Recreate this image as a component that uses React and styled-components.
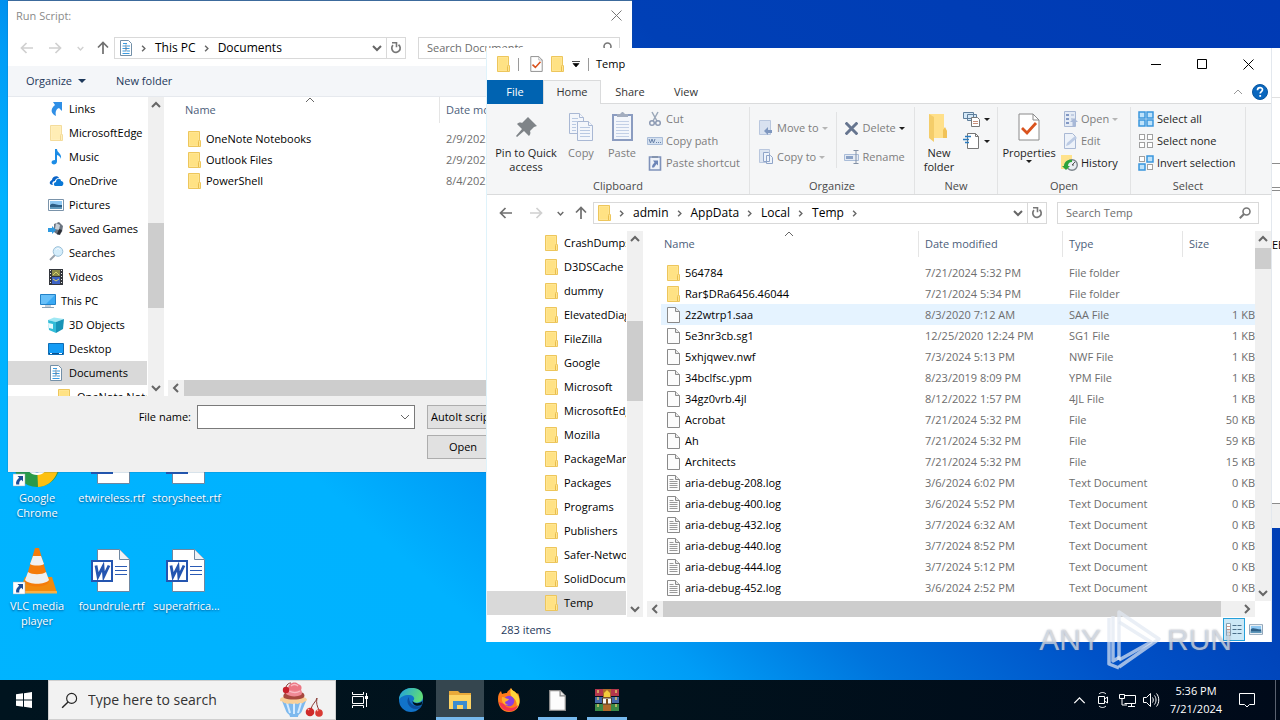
import React from "react";
import styled, { createGlobalStyle } from "styled-components";

const GlobalStyle = createGlobalStyle`
  * {
    box-sizing: border-box;
  }
  body {
    margin: 0;
    font-family: "Open Sans", "Noto Sans", sans-serif;
    font-size: 11px;
    line-height: 16px;
    color: #000;
    overflow: hidden;
  }
  button, input, select {
    font: inherit;
    color: inherit;
    border: 0;
    padding: 0;
    margin: 0;
    background: none;
    border-radius: 0;
    outline: none;
  }
  svg {
    display: block;
    flex: none;
  }
`;

/* ---------- desktop ---------- */

const Desktop = styled.div`
  position: relative;
  display: flex;
  flex-direction: column;
  justify-content: flex-end;
  height: 100vh;
  overflow: hidden;
  background: linear-gradient(
    42deg,
    #00b4ff 0%,
    #00b2ff 28%,
    #009cf6 36%,
    #0074dc 45%,
    #0052c8 56%,
    #0040b6 68%,
    #003ab4 100%
  );
`;

const Shortcuts = styled.div`
  position: absolute;
  left: 0;
  top: 438px;
  display: grid;
  grid-template-columns: 74px 75px 75px;
  grid-auto-rows: 108px;
`;

const Shortcut = styled.button`
  display: flex;
  flex-direction: column;
  align-items: center;
  color: #fff;
  line-height: 15px;
  text-shadow: 0 1px 2px rgba(0, 40, 90, 0.7);
  svg {
    margin-bottom: 2px;
  }
`;

const BackWindow = styled.div`
  position: absolute;
  right: 0;
  top: 48px;
  width: 300px;
  height: 480px;
  display: flex;
  flex-direction: column;
  align-items: flex-end;
  background: #fff;
`;

const BackBar = styled.div`
  width: 100%;
  height: ${(p) => p.$height}px;
  border-bottom: 1px solid ${(p) => p.$line};
`;

const BackText = styled.div`
  flex: 1;
  width: 8px;
  padding-top: 46px;
  overflow: hidden;
`;

const BackFoot = styled.div`
  width: 100%;
  height: 25px;
  background: #f0f0f0;
  border-top: 1px solid #8c8c8c;
`;

/* ---------- shared window parts ---------- */

const Dialog = styled.section`
  position: absolute;
  left: 8px;
  top: 0;
  width: 624px;
  display: flex;
  flex-direction: column;
  height: 472px;
  background: #fff;
  border-top: 1px solid #3c6a9c;
  box-shadow: 0 0 1px #1a5a8a;
`;

const Explorer = styled.section`
  position: absolute;
  left: 486px;
  right: 8px;
  top: 48px;
  height: 594px;
  display: flex;
  flex-direction: column;
  background: #fff;
  border-left: 1px solid #dff3fb;
  border-right: 1px solid #e3e8ee;
`;

const NavRow = styled.div`
  display: flex;
  align-items: center;
  height: 36px;
  padding: 0 12px 0 ${(p) => p.$left}px;
`;

const NavButton = styled.button`
  display: flex;
  justify-content: center;
  width: ${(p) => p.$width || 28}px;
`;

const Address = styled.div`
  display: flex;
  align-items: center;
  flex: ${(p) => (p.$width ? "none" : 1)};
  width: ${(p) => (p.$width ? `${p.$width}px` : "auto")};
  height: 22px;
  padding-left: 4px;
  border: 1px solid #d9d9d9;
  font-size: 12px;
`;

const Crumb = styled.button`
  display: flex;
  align-items: center;
  svg {
    margin: 0 8px 0 7px;
  }
`;

const AddressSpace = styled.div`
  flex: 1;
`;

const AddressButton = styled.button`
  display: flex;
  align-items: center;
  justify-content: center;
  width: 19px;
  height: 20px;
  border-left: ${(p) => (p.$line ? "1px solid #d9d9d9" : "0")};
`;

const SearchBox = styled.label`
  display: flex;
  align-items: center;
  width: 202px;
  height: 22px;
  margin-left: ${(p) => p.$gap}px;
  padding: 0 7px 0 8px;
  border: 1px solid #d9d9d9;
  input {
    flex: 1;
    min-width: 0;
  }
  input::placeholder {
    color: #6d6d6d;
    opacity: 1;
  }
`;

const Split = styled.div`
  display: flex;
  flex: 1;
  min-height: 0;
`;

const Tree = styled.div`
  width: ${(p) => p.$width}px;
  overflow: hidden;
`;

const TreeItem = styled.button`
  display: flex;
  align-items: center;
  width: 100%;
  height: 24px;
  padding-left: ${(p) => p.$indent}px;
  gap: 5px;
  overflow: hidden;
  white-space: nowrap;
  background: ${(p) => (p.$active ? "#d9d9d9" : "none")};
`;

const IconSlot = styled.span`
  display: flex;
  justify-content: center;
  flex: none;
  width: ${(p) => p.$width || 16}px;
`;

const VTrack = styled.div`
  display: flex;
  flex-direction: column;
  justify-content: space-between;
  width: 16px;
  margin-left: ${(p) => p.$left || 0}px;
  margin-bottom: ${(p) => p.$bottom || 0}px;
  background: #f0f0f0;
`;

const HTrack = styled.div`
  display: flex;
  height: 16px;
  background: #f0f0f0;
`;

const ScrollButton = styled.button`
  display: flex;
  align-items: center;
  justify-content: center;
  flex: none;
  width: 16px;
  height: 16px;
`;

const Rail = styled.div`
  display: flex;
  flex-direction: ${(p) => (p.$row ? "row" : "column")};
  flex: 1;
`;

const Space = styled.div`
  flex: ${(p) => p.$grow};
`;

const Thumb = styled.div`
  flex: ${(p) => p.$grow};
  background: #cdcdcd;
`;

const Pane = styled.div`
  display: flex;
  flex-direction: column;
  flex: 1;
  min-width: 0;
  margin-left: 4px;
`;

const TableArea = styled.div`
  flex: 1;
  min-height: 0;
  overflow: hidden;
  padding-left: 14px;
`;

const Table = styled.table`
  width: 100%;
  table-layout: fixed;
  border-collapse: collapse;
  white-space: nowrap;
  th {
    height: 31px;
    padding: 0;
    vertical-align: top;
    text-align: left;
    font-weight: 400;
    color: #4c607a;
  }
  td {
    height: 21px;
    padding: 0 0 0 6px;
    overflow: hidden;
    color: #6d6d6d;
  }
  td:first-child {
    color: #000;
  }
  td:nth-child(4) {
    text-align: right;
    padding: 0;
  }
`;

const HeadCell = styled.div`
  position: relative;
  display: flex;
  align-items: center;
  height: 26px;
  padding-left: ${(p) => (p.$first ? 3 : 6)}px;
  border-right: ${(p) => (p.$last ? "0" : "1px solid #e5e5e5")};
  svg {
    position: absolute;
    top: -2px;
    left: 50%;
    margin-left: -6px;
  }
`;

const FileRow = styled.tr`
  background: ${(p) => (p.$active ? "#e5f3ff" : "none")};
`;

const FileName = styled.div`
  display: flex;
  align-items: center;
  gap: 5px;
`;

/* ---------- run script dialog ---------- */

const DialogTitle = styled.header`
  display: flex;
  align-items: center;
  justify-content: space-between;
  height: 29px;
  padding: 0 10px 0 8px;
  color: #8a8a8a;
`;

const Toolbar = styled.div`
  display: flex;
  align-items: center;
  gap: 30px;
  height: 31px;
  padding-left: 18px;
  background: #f4f6f9;
  border-bottom: 1px solid #e6e9ee;
  color: #1e395b;
`;

const ToolButton = styled.button`
  display: flex;
  align-items: center;
  gap: 6px;
`;

const DialogFooter = styled.footer`
  display: grid;
  grid-template-columns: 183px 218px 110px;
  grid-auto-rows: 24px;
  column-gap: 6px;
  row-gap: 6px;
  height: 76px;
  padding-top: 9px;
  background: #f0f0f0;
`;

const FieldLabel = styled.label`
  text-align: right;
  line-height: 24px;
`;

const Combo = styled.div`
  display: flex;
  align-items: center;
  padding-right: 4px;
  background: #fff;
  border: 1px solid #7a7a7a;
  input {
    flex: 1;
    min-width: 0;
    padding-left: 4px;
  }
`;

const TypeSelect = styled.select`
  appearance: none;
  margin-left: 6px;
  padding-left: 3px;
  background: #e1e1e1;
  border: 1px solid #adadad;
`;

const OpenButton = styled.button`
  grid-column: 3;
  margin-left: 6px;
  width: 72px;
  background: #e1e1e1;
  border: 1px solid #adadad;
`;

/* ---------- explorer ---------- */

const TitleBar = styled.header`
  display: flex;
  align-items: center;
  height: 32px;
  padding-left: 10px;
`;

const Divider = styled.span`
  width: 1px;
  height: 13px;
  margin: 0 ${(p) => p.$right || 7}px 0 8px;
  background: #9a9a9a;
`;

const TitleText = styled.span`
  flex: 1;
`;

const Control = styled.button`
  display: flex;
  align-items: center;
  justify-content: center;
  width: 46px;
  height: 30px;
`;

const Tabs = styled.div`
  display: flex;
  align-items: center;
  height: 24px;
  border-bottom: 1px solid #dadbdc;
`;

const Tab = styled.button`
  width: ${(p) => p.$width}px;
  height: 24px;
  color: ${(p) => (p.$file ? "#fff" : "#333")};
  background: ${(p) => (p.$file ? "#0063b1" : p.$active ? "#f5f6f7" : "none")};
  border: 1px solid ${(p) => (p.$file ? "#0063b1" : p.$active ? "#dadbdc" : "transparent")};
  border-bottom: 0;
`;

const TabTools = styled.div`
  display: flex;
  align-items: center;
  gap: 9px;
  margin-left: auto;
  padding-right: 3px;
`;

const Ribbon = styled.div`
  display: flex;
  height: 91px;
  padding: 3px 0 0;
  background: #f5f6f7;
  border-bottom: 1px solid #dadbdc;
  color: #1e1e1e;
`;

const Group = styled.div`
  display: flex;
  flex-direction: column;
  width: ${(p) => p.$width}px;
  border-right: 1px solid #e2e3e4;
`;

const GroupBody = styled.div`
  display: flex;
  flex: 1;
`;

const GroupLabel = styled.div`
  height: 16px;
  text-align: center;
  color: #4a4a4a;
`;

const BigButton = styled.button`
  display: flex;
  flex-direction: column;
  align-items: center;
  flex: none;
  width: ${(p) => p.$width}px;
  padding-top: 4px;
  line-height: 14px;
  color: ${(p) => (p.$off ? "#7d7d7d" : "#1e1e1e")};
  svg:first-child {
    margin-bottom: 3px;
  }
`;

const Stack = styled.div`
  display: flex;
  flex-direction: column;
  justify-content: ${(p) => (p.$center ? "center" : "flex-start")};
  gap: ${(p) => (p.$center ? 13 : 6)}px;
  padding-top: ${(p) => (p.$center ? 0 : 4)}px;
  padding-left: ${(p) => p.$left || 0}px;
`;

const SmallButton = styled.button`
  display: flex;
  align-items: center;
  gap: 3px;
  height: 16px;
  white-space: nowrap;
  color: ${(p) => (p.$off ? "#7d7d7d" : "#1e1e1e")};
`;

const GroupLine = styled.div`
  width: 1px;
  height: 56px;
  margin: 5px 0 0 8px;
  background: #e2e3e4;
`;

const StatusBar = styled.footer`
  display: flex;
  align-items: center;
  height: 25px;
  padding: 0 4px 0 14px;
  color: #1e395b;
`;

const ViewButton = styled.button`
  display: flex;
  align-items: center;
  justify-content: center;
  width: 22px;
  height: 23px;
  background: ${(p) => (p.$active ? "#cce8f6" : "none")};
  border: 1px solid ${(p) => (p.$active ? "#26a0da" : "transparent")};
`;

/* ---------- taskbar ---------- */

const Taskbar = styled.nav`
  position: relative;
  display: flex;
  height: 40px;
  background: linear-gradient(90deg, #00141f 0%, #01121c 50%, #000a1a 100%);
  color: #fff;
`;

const TaskButton = styled.button`
  display: flex;
  align-items: center;
  justify-content: center;
  width: ${(p) => p.$width || 49}px;
  background: ${(p) => (p.$active ? "#35464f" : "none")};
`;

const RunningButton = styled(TaskButton)`
  padding-top: 3px;
  border-bottom: 3px solid #76b9ed;
  width: ${(p) => p.$width}px;
  margin: 0 ${(p) => p.$gap || 0}px;
`;

const TaskSearch = styled.label`
  display: flex;
  align-items: center;
  width: 288px;
  padding: 0 12px 0 12px;
  gap: 10px;
  background: #f2f2f2;
  border: 1px solid #cfcfcf;
  input {
    flex: 1;
    min-width: 0;
    font-size: 14px;
  }
  input::placeholder {
    color: #333;
    opacity: 1;
  }
`;

const Tray = styled.div`
  display: flex;
  align-items: center;
  margin-left: auto;
`;

const TrayButton = styled.button`
  display: flex;
  justify-content: center;
  width: 24px;
`;

const Clock = styled.div`
  width: 66px;
  text-align: center;
  line-height: 18px;
`;

const ShowDesktop = styled.button`
  width: 5px;
  height: 40px;
  margin-left: 10px;
  border-left: 1px solid #5a6270;
`;

const Watermark = styled.div`
  position: absolute;
  right: 48px;
  bottom: 48px;
  display: flex;
  align-items: center;
  gap: 5px;
  font-family: "Liberation Sans Narrow", "Liberation Sans", sans-serif;
  font-size: 30px;
  line-height: 64px;
  color: rgba(225, 230, 238, 0.7);
  text-shadow: 0 0 2px rgba(90, 100, 120, 0.6);
`;

/* ---------- icons ---------- */

const Folder = ({ w = 13, h = 16, pale }) => (
  <svg width={w} height={h} viewBox="0 0 13 16" opacity={pale ? 0.6 : 1}>
    <path d="M.5 .5h11v8l1 1.500v5.500H.5z" fill="#ffe592" stroke="#edc65c" />
    <path d="M2 2h8v12H2z" fill="#ffe07c" opacity=".6" />
    <path d="M10.500 15v-4.500l1-2" fill="none" stroke="#e9bd4c" />
  </svg>
);

const Page = ({ lines, w = 13, h = 16 }) => (
  <svg width={w} height={h} viewBox="0 0 13 16">
    <path d="M.5 .5h8l4 4v11H.5z" fill="#fcfcfc" stroke="#8a8a8a" />
    <path d="M8.500 .5v4h4" fill="#e8e8e8" stroke="#8a8a8a" />
    {lines && <path d="M2.500 4.500h4M2.500 6.500h8M2.500 8.500h8M2.500 10.500h8M2.500 12.500h8" stroke="#9a9a9a" />}
  </svg>
);

const DocIcon = () => (
  <svg width="14" height="16" viewBox="0 0 14 16">
    <path d="M1.500 .5h8l3 3v12h-11z" fill="#fff" stroke="#7390a8" />
    <path d="M4 3.500h4M3.500 6h3M8 6h3M3.500 8.500h7M3.500 11h3M8 11h3M3.500 13.500h7" stroke="#3a9be0" strokeWidth="1.200" />
    <path d="M7 4.500v7" stroke="#5a7a96" />
  </svg>
);

const LinkIcon = () => (
  <svg width="14" height="16" viewBox="0 0 14 16">
    <path d="M4 1h9v9l-3-3c-3 1-4 4-3 8C3 13 0 9 6 4z" fill="#2f8fe6" />
  </svg>
);

const MusicIcon = () => (
  <svg width="14" height="16" viewBox="0 0 14 16">
    <path d="M6 0h2c0 4 5 4 4 10-.5-2-2-3.500-4-4v6.500C8 15 5 16 3.500 15S2 11 6 11z" fill="#1c8ce6" />
  </svg>
);

const CloudIcon = () => (
  <svg width="15" height="12" viewBox="0 0 15 12">
    <path d="M1 9C0 6 3 5 3 5c0-4 6-5 7-2-3 0-4 2-4 3-3 0-3 3-2 4H3z" fill="#0a64c8" />
    <path d="M6 11c-2-1-1-4 1-4 0-4 5-4 5-1 3 0 3 4 1 5z" fill="#0a78d6" />
  </svg>
);

const PictureIcon = ({ w = 16, h = 12 }) => (
  <svg width={w} height={h} viewBox="0 0 16 12">
    <path d="M.5 .5h15v11H.5z" fill="#fff" stroke="#7a93aa" />
    <path d="M2 2h12v8H2z" fill="#8fc8f2" />
    <path d="M2 6c3-3 5 0 12 0v4H2z" fill="#2e5f86" />
    <path d="M2 8h12v2H2z" fill="#5f97ba" />
  </svg>
);

const GamesIcon = () => (
  <svg width="16" height="14" viewBox="0 0 16 14">
    <path d="M6 2l5-2 4 4-1 6-4 3-4-3z" fill="#6b7480" />
    <path d="M8 1l4 2-1 5-4-1z" fill="#c8d0d8" />
    <path d="M0 6h4V4l4 4-4 4v-2H0z" fill="#2e9ae0" />
    <path d="M11 7l3 1-2 5-3-1z" fill="#2b2f36" />
  </svg>
);

const SearchesIcon = () => (
  <svg width="15" height="15" viewBox="0 0 15 15">
    <path d="M1 14l5-5" stroke="#9aa3ad" strokeWidth="2" />
    <circle cx="9" cy="5.500" r="4.800" fill="#d4edfb" stroke="#9cc0d8" />
    <path d="M7 4c1-2 3-2 4 0" stroke="#fff" fill="none" />
  </svg>
);

const VideoIcon = () => (
  <svg width="14" height="16" viewBox="0 0 14 16">
    <path d="M0 0h14v16H0z" fill="#33363c" />
    <path d="M3 1h8v6H3z" fill="#8a8a4a" />
    <path d="M3 8h8v7H3z" fill="#3d62c4" />
    <path d="M4 6l3-3 3 3M4 10l3 2 3-2" stroke="#d9d36a" fill="none" />
    <path d="M1.500 1v14M12.500 1v14" stroke="#e8e8e8" strokeDasharray="1 2" />
  </svg>
);

const PcIcon = () => (
  <svg width="16" height="14" viewBox="0 0 16 14">
    <path d="M.5 .5h15v10H.5z" fill="#39a9f4" stroke="#2382c8" />
    <path d="M1 1h14L6 10H1z" fill="#7ccbfb" opacity=".7" />
    <path d="M5 12h6M2 13.500h12" stroke="#8ca1b4" />
  </svg>
);

const CubeIcon = () => (
  <svg width="16" height="16" viewBox="0 0 16 16">
    <path d="M0 3l6-2.500L16 2 8 5z" fill="#9fe8f4" />
    <path d="M0 3l8 2v11l-7-3z" fill="#32bcd8" />
    <path d="M8 5l8-3-1 10-7 4z" fill="#1794b8" />
    <path d="M0 6l5 1v5l-4-1z" fill="#e6fbff" />
  </svg>
);

const ScreenIcon = () => (
  <svg width="16" height="12" viewBox="0 0 16 12">
    <path d="M.5 .5h15v11H.5z" fill="#149cf5" stroke="#0f6db4" />
    <path d="M1 10.500h14" stroke="#0a4f8c" />
    <path d="M2 10.500h2M11 10.500h3" stroke="#fff" />
  </svg>
);

const Arrow = ({ dir = "left", color = "#6f6f6f", size = 14 }) => {
  const turns = { left: 0, up: 90, right: 180 };
  return (
    <svg width={size} height={size} viewBox="0 0 14 14">
      <path d="M13 7H2M6.500 2L1.500 7l5 5" fill="none" stroke={color} strokeWidth="1.700" transform={`rotate(${turns[dir]} 7 7)`} />
    </svg>
  );
};

const Chevron = ({ dir = "down", color = "#666", size = 10, stroke = 2 }) => {
  const turns = { down: 0, left: 90, up: 180, right: 270 };
  return (
    <svg width={size} height={size} viewBox="0 0 10 10">
      <path d="M1 3l4 4 4-4" fill="none" stroke={color} strokeWidth={stroke} transform={`rotate(${turns[dir]} 5 5)`} />
    </svg>
  );
};

const Caret = ({ color = "#1e1e1e", w = 6 }) => (
  <svg width={w} height={w / 2} viewBox="0 0 6 3">
    <path d="M0 0h6L3 3z" fill={color} />
  </svg>
);

const Refresh = () => (
  <svg width="12" height="12" viewBox="0 0 12 12">
    <path d="M3 3.200a4.200 4.200 0 1 0 5.500-.4" fill="none" stroke="#777" strokeWidth="1.700" />
    <path d="M2 .8h4.500v4.500" fill="none" stroke="#777" strokeWidth="1.600" />
  </svg>
);

const Magnifier = ({ size = 12, color = "#777", stroke = 2 }) => (
  <svg width={size} height={size} viewBox="0 0 12 12">
    <circle cx="7.500" cy="4.500" r="3.500" fill="none" stroke={color} strokeWidth={stroke * 0.8} />
    <path d="M5 7L.8 11.200" stroke={color} strokeWidth={stroke} />
  </svg>
);

const Cross = ({ size = 11, color = "#000", stroke = 1 }) => (
  <svg width={size} height={size} viewBox="0 0 11 11">
    <path d="M.5 .5l10 10M10.500 .5l-10 10" stroke={color} strokeWidth={stroke} />
  </svg>
);

const Checked = ({ w = 13, h = 16 }) => (
  <svg width={w} height={h} viewBox="0 0 22 28">
    <path d="M1 1h14l6 6v20H1z" fill="#fff" stroke="#8a8a8a" strokeWidth={w > 14 ? 1 : 1.600} />
    <path d="M15 1v6h6" fill="none" stroke="#8a8a8a" />
    <path d="M4 15l5 5 9-10" fill="none" stroke="#d9531e" strokeWidth="2.800" />
  </svg>
);

const PinIcon = () => (
  <svg width="32" height="32" viewBox="0 0 32 32">
    <path d="M18 6l9 9-3 1-4 4c1 2 0 4-1 5l-5-5-7 6-1-1 6-7-5-5c1-1 3-2 5-1l4-4z" fill="#7f8488" />
  </svg>
);

const CopyIcon = () => (
  <svg width="32" height="32" viewBox="0 0 32 32">
    <g fill="#f3f6fb" stroke="#a9b8d4">
      <path d="M4.500 2.500h10l4 4v16h-14z" />
      <path d="M12.500 10.500h11l4 4v15h-15z" />
      <path d="M23.500 10.500v4h4M14.500 2.500v4h4" />
      <path d="M7 7.500h6M7 10.500h5M7 13.500h4M7 16.500h4M7 19.500h4M15 16.500h10M15 19.500h10M15 22.500h10M15 25.500h10" stroke="#b9c9e2" />
    </g>
  </svg>
);

const PasteIcon = () => (
  <svg width="32" height="32" viewBox="0 0 32 32">
    <path d="M7 4h19v25H7z" fill="#f3f6fb" stroke="#8b9cc0" strokeWidth="2" />
    <path d="M11 5V3h3l2-2h1l2 2h3v3H11z" fill="#a3adbf" />
    <path d="M10 10.500h13M10 13.500h13M10 16.500h13M10 19.500h13M10 22.500h13M10 25.500h13" stroke="#c3d0e6" />
  </svg>
);

const CutIcon = () => (
  <svg width="16" height="16" viewBox="0 0 16 16">
    <path d="M5 1l5 9M11 1L6 10" stroke="#9aa7b8" strokeWidth="1.500" />
    <circle cx="5" cy="12" r="2.300" fill="none" stroke="#8e9bb4" strokeWidth="1.500" />
    <circle cx="11" cy="12" r="2.300" fill="none" stroke="#8e9bb4" strokeWidth="1.500" />
  </svg>
);

const PathIcon = () => (
  <svg width="16" height="16" viewBox="0 0 16 16">
    <path d="M.5 4.500h15v7H.5z" fill="#d5e1f0" stroke="#a9bcd8" />
    <path d="M2 6l1.500 4L5 6l1.500 4L8 6M9 9.500h1M11 9.500h1M13 9.500h1" stroke="#6882aa" fill="none" />
  </svg>
);

const ShortcutPaste = () => (
  <svg width="16" height="16" viewBox="0 0 16 16">
    <path d="M2.500 2h11v13h-11z" fill="#eef2f9" stroke="#7f92ba" strokeWidth="1.600" />
    <path d="M5 1h6v2H5z" fill="#8494ae" />
    <path d="M6 5.500h5v5L9.500 9 7 12.500H5c0-2 1-3.500 2.500-5z" fill="#6c85b8" />
  </svg>
);

const MoveIcon = () => (
  <svg width="16" height="16" viewBox="0 0 16 16">
    <path d="M1.500 .5h11v14h-11z" fill="#d9e2f0" stroke="#b9c7de" />
    <path d="M6 11l4-4v3h4v3h-4v2z" fill="#7f97bf" />
  </svg>
);

const CopyToIcon = () => (
  <svg width="16" height="16" viewBox="0 0 16 16">
    <path d="M1.500 .5h10v13h-10z" fill="#dde5f1" stroke="#b9c7de" />
    <path d="M5.500 3.500h5l1 1v8h-6zM8.500 6.500h4l2 2v6h-6z" fill="#eef3fa" stroke="#8fa4c8" />
  </svg>
);

const RenameIcon = () => (
  <svg width="16" height="16" viewBox="0 0 16 16">
    <path d="M.5 5.500h14v6H.5z" fill="#e5ebf4" stroke="#a9bcd8" />
    <path d="M2 7h7v3H2z" fill="#8ba2c6" />
    <path d="M9.500 1.500h5M9.500 14.500h5M12 1.500v13" stroke="#8391a6" />
  </svg>
);

const NewFolderIcon = () => (
  <svg width="32" height="32" viewBox="0 0 32 32">
    <path d="M6 3h15v14l3 3v7H6z" fill="#ffe08a" />
    <path d="M6 3l5 3v25l-5-4z" fill="#f4cd6a" />
    <path d="M20 19l2-3 2 4v7h-4z" fill="#f1c257" />
  </svg>
);

const NewItemIcon = () => (
  <svg width="18" height="16" viewBox="0 0 18 16">
    <path d="M.5 1.500h10v6H.5zM4.500 3.500h9v6h-9z" fill="#d4e8f7" stroke="#5f7f9c" />
    <path d="M8.500 6.500h6l2 2v7h-8z" fill="#fff" stroke="#777" />
    <path d="M10 10.500h5M10 12.500h5" stroke="#c98f7a" />
  </svg>
);

const EasyIcon = () => (
  <svg width="18" height="16" viewBox="0 0 18 16">
    <path d="M4.500 .5h8l3 3v12h-11z" fill="#fff" stroke="#777" />
    <path d="M12.500 .5v3h3" fill="none" stroke="#777" />
    <path d="M2 3.500h6M0 6.500h6M2 9.500h4" stroke="#2b7cc0" strokeWidth="1.400" />
  </svg>
);

const OpenIcon = () => (
  <svg width="16" height="16" viewBox="0 0 16 16">
    <path d="M2.500 .5h11v15h-11z" fill="#e4ebf5" stroke="#a9b8d4" />
    <path d="M4 3h3v2H4zM4 7h3v2H4zM4 11h3v2H4z" fill="#8298c4" />
    <path d="M9 4h3M9 8h2" stroke="#9fb0cf" />
    <path d="M12 7l4 4h-2.500v4h-3v-4H8z" fill="#a8b9d8" />
  </svg>
);

const EditIcon = () => (
  <svg width="16" height="16" viewBox="0 0 16 16">
    <path d="M2.500 .5h8l3 3v12h-11z" fill="#edf2f9" stroke="#a9b8d4" />
    <path d="M4 13l1-3 8-7 2 2-8 7z" fill="#bccbe4" />
  </svg>
);

const HistoryIcon = () => (
  <svg width="18" height="16" viewBox="0 0 18 16">
    <path d="M0 0h11v14H0z" fill="#ffe28c" />
    <circle cx="11" cy="10" r="5.300" fill="#e9eef2" stroke="#7c858c" strokeWidth="1.400" />
    <path d="M11 10l3-3M11 10h2" stroke="#555" />
    <path d="M3 11c0-4 4-7 8-6v2C8 7 7 9 7 11h2l-4 4-4-4z" fill="#2da33c" />
  </svg>
);

const Squares = ({ fills }) => (
  <svg width="16" height="16" viewBox="0 0 16 16">
    {fills.map((on, i) => (
      <rect
        key={i}
        x={(i % 2 ? 9 : 1) + (on ? 0 : 0.5)}
        y={(i > 1 ? 9 : 1) + (on ? 0 : 0.5)}
        width={on ? 6 : 5}
        height={on ? 6 : 5}
        fill={on ? "#bfe3fb" : "#fff"}
        stroke={on ? "#3a96dd" : "#a0a0a0"}
        strokeWidth={on ? 1.500 : 1}
      />
    ))}
  </svg>
);

const HelpIcon = () => (
  <svg width="16" height="16" viewBox="0 0 16 16">
    <circle cx="8" cy="8" r="7.500" fill="#0a67be" stroke="#08569f" />
    <path d="M5.500 6.200c0-3.500 5-3.200 5-.4 0 1.800-2.300 1.800-2.300 3.700" fill="none" stroke="#fff" strokeWidth="1.700" />
    <path d="M7.300 11h1.800v1.800H7.300z" fill="#fff" />
  </svg>
);

const DetailsIcon = () => (
  <svg width="16" height="13" viewBox="0 0 16 13">
    <path d="M.5 .5h4v12h-4z" fill="#fff" stroke="#8aa0b0" />
    <path d="M1 3.500h3M1 6.500h3M1 9.500h3" stroke="#d49a8a" />
    <path d="M6.500 2.500h4M11.500 2.500h4M6.500 6.500h4M11.500 6.500h4M6.500 10.500h4M11.500 10.500h4" stroke="#4a6e88" />
  </svg>
);

const ShortcutBadge = ({ y }) => (
  <g transform={`translate(0 ${y})`}>
    <path d="M0 0h12v12H0z" fill="#fff" stroke="#9ab" strokeWidth=".5" />
    <path d="M4.500 2H10v5.500L8.300 5.800C6.500 7 6 8.500 6.300 10.500H3.200C2.500 8 4 5.500 6.200 3.800z" fill="#1f4e96" />
  </g>
);

const ChromeIcon = () => (
  <svg width="48" height="50" viewBox="0 0 48 50">
    <circle cx="24" cy="26" r="23" fill="#2a9a48" />
    <path d="M24 26L44 15c6 16-3 33-19 34z" fill="#fdc010" />
    <path d="M24 26L4 15C12-1 36-1 44 15z" fill="#e33b2e" />
    <circle cx="24" cy="26" r="11" fill="#fff" />
    <circle cx="24" cy="26" r="8.500" fill="#3b78e7" />
    <ShortcutBadge y={36} />
  </svg>
);

const VlcIcon = () => (
  <svg width="48" height="50" viewBox="0 0 48 50">
    <path d="M12 31h27l5 16H6z" fill="#f28a0e" />
    <path d="M6 45h38v2.500H6z" fill="#fbb041" />
    <path d="M22 2h4l10 34c-4 6-20 6-24 0z" fill="#f57c0a" />
    <path d="M20 10h8l3 8c-3 2-11 2-14 0z" fill="#f1f1f1" />
    <path d="M15 26c4 3 14 3 18 0l3 8c-4 5-20 5-24 0z" fill="#efefef" />
    <ShortcutBadge y={36} />
  </svg>
);

const WordIcon = () => (
  <svg width="44" height="50" viewBox="0 0 44 50">
    <path d="M7.500 3.500h22l10 10v32h-32z" fill="#fff" stroke="#6f87a0" />
    <path d="M29.500 3.500v10h10" fill="#eef2f6" stroke="#6f87a0" />
    <path d="M25 20.500h12M25 24.500h12M25 28.500h12" stroke="#2b5bb5" />
    <path d="M2 15h20v20H2z" fill="#fff" stroke="#2455b0" strokeWidth="2" />
    <path d="M6 19.500l2 11 5-10 .8 10 5.200-11" fill="none" stroke="#2455b0" strokeWidth="2.800" />
  </svg>
);

const WindowsLogo = () => (
  <svg width="16" height="16" viewBox="0 0 16 16">
    <path d="M0 2.300l7-1v6.300H0zM8 1.200L16 0v7.600H8zM0 8.500h7v6.200l-7-1zM8 8.500h8V16l-8-1.200z" fill="#fff" />
  </svg>
);

const Sundae = () => (
  <svg width="44" height="36" viewBox="0 0 44 36">
    <path d="M3 19h24l-4 10c-1 3-4 3-4 6h-8c0-3-3-3-4-6z" fill="#7db9ee" />
    <path d="M8 21l3 10M15 21v11M22 21l-3 10" stroke="#d4ebff" strokeWidth="2" />
    <path d="M1 18c0-3 4-4 14-4s13 2 13 4c-1 2-3 1-4 3-2 1-3-1-5 1-2 0-3-1-5 0-2 0-3-1-5 0-2-1-3 0-5-2-1-1-3 0-3-2z" fill="#f8d09a" />
    <path d="M5 16c-2-3 1-6 4-6l12 0c4 0 6 4 3 6-5 2-14 2-19 0z" fill="#a8483e" />
    <path d="M7 12c-1-3 2-5 5-5h7c4 0 5 4 3 6-4 2-11 2-15-1z" fill="#f08a96" />
    <path d="M9 7c0-6 7-8 10-5 4 1 4 4 3 6-4 1-9 1-13-1z" fill="#ec7683" />
    <path d="M12 4c2-2 5-2 7 0M10 9c4 2 8 2 11 0" fill="none" stroke="#f9bcc4" strokeWidth="1.300" />
    <circle cx="7" cy="8" r="3.200" fill="#c8202c" />
    <path d="M7 5c1-3 3-4 5-4M32 27c1-5 5-7 6-11-1 5 0 8 2 12" fill="none" stroke="#8a3a34" />
    <circle cx="31" cy="30" r="4.300" fill="#cf2a2a" />
    <circle cx="40" cy="31" r="3.800" fill="#d93a34" />
    <path d="M29 28l1-1M38 29l1-1" stroke="#ffb0a8" strokeWidth="1.500" />
  </svg>
);

const TaskViewIcon = () => (
  <svg width="17" height="16" viewBox="0 0 17 16">
    <path d="M.5 0v2.500h11V0M.5 16v-2.500h11V16M.5 4.500h11v7H.5z" fill="none" stroke="#fff" />
    <path d="M14.500 1v14" stroke="#fff" />
    <path d="M13 4h3v3h-3z" fill="#fff" />
  </svg>
);

const EdgeIcon = () => (
  <svg width="24" height="24" viewBox="0 0 24 24">
    <defs>
      <linearGradient id="edge" x1="0" y1="0" x2="1" y2="0.3">
        <stop offset="0" stopColor="#1f9fe0" />
        <stop offset="1" stopColor="#5edb7a" />
      </linearGradient>
    </defs>
    <circle cx="12" cy="12" r="12" fill="#1173c9" />
    <path d="M0 12C0-3 24-4 24 9c0 6-8 7-10 4 3-3 0-6-4-6-5 0-9 2-10 5z" fill="url(#edge)" />
    <path d="M10 9c-4 4 0 12 7 12 3 0 5-2 5.500-3-6 2-13-2-12.500-9z" fill="#0d4f9e" />
    <path d="M13.500 13c2 3 7 3 10 0l-1 4c-5 2-9 0-9-4z" fill="#01121c" />
  </svg>
);

const ExplorerIcon = () => (
  <svg width="24" height="20" viewBox="0 0 24 20">
    <path d="M1 1h9l2 2h11v5H1z" fill="#e8a93a" />
    <path d="M1 5h22v14H1z" fill="#fcd364" />
    <path d="M5 11h14v8h-4v-4H9v4H5z" fill="#3c8cd0" />
  </svg>
);

const FirefoxIcon = () => (
  <svg width="24" height="24" viewBox="0 0 24 24">
    <path d="M1 11c0-4 1-6 3-8l1 3c2-1 4-1 5-1 0-2 3-3 4-5 1 3 4 3 6 6l1-1c3 6 3 19-9 19C5 24 1 18 1 11z" fill="#ff7a1c" />
    <path d="M14 0c1 3 4 3 6 6 4 5 3 12-1 15 2-5 0-10-4-12-2-2-2-6-1-9z" fill="#ffd43a" />
    <path d="M2 14c1 5 5 9 10 9s8-2 9-6c-4 4-12 4-14-1z" fill="#f5364e" />
    <circle cx="12" cy="13" r="5.300" fill="#8a3fe0" />
    <path d="M5 9c3 0 4 2 7 2-1 2-3 2-4 3 0 2 2 3 4 3-5 1-8-3-7-8z" fill="#ffb02e" />
  </svg>
);

const RarIcon = () => (
  <svg width="24" height="22" viewBox="0 0 24 22">
    <path d="M0 0h24v7H0z" fill="#b3364c" />
    <path d="M0 8h24v6H0z" fill="#4468a8" />
    <path d="M0 15h24v7H0z" fill="#3a8a48" />
    <path d="M3 1v20M21 1v20" stroke="#d9c46a" strokeWidth="1.500" strokeDasharray="3 4" />
    <path d="M8 0h8v22H8z" fill="#b06a2a" />
    <path d="M9 4l3-3 3 3v4H9z" fill="#f3cc3c" />
    <path d="M7.500 9h9v6h-9z" fill="#f6f6f0" stroke="#4a3a2a" />
    <path d="M11 10h2v5h-2z" fill="#7a4a1a" />
  </svg>
);

const CameraTray = () => (
  <svg width="14" height="18" viewBox="0 0 14 18">
    <path d="M2.500 5.500h6v7h-6zM8.500 8l3-2v6l-3-2" fill="none" stroke="#fff" />
    <path d="M3 3c2-2 5-2 7 0M3 15c2 2 5 2 7 0" fill="none" stroke="#fff" />
  </svg>
);

const NetworkTray = () => (
  <svg width="17" height="15" viewBox="0 0 17 15">
    <path d="M5.500 2.500h11v8h-11M9 13.500h7M12.500 10.500v3M.5 1.500h5v4h-5zM3 5.500v6.500h5" fill="none" stroke="#fff" />
  </svg>
);

const VolumeTray = () => (
  <svg width="17" height="14" viewBox="0 0 17 14">
    <path d="M.5 4.500h3l4-4v13l-4-4h-3z" fill="none" stroke="#fff" />
    <path d="M9.500 4.500c1 1.500 1 3.500 0 5M11.500 2.500c2 2.500 2 6.500 0 9M13.500 .5c3 3.500 3 9.500 0 13" fill="none" stroke="#fff" />
  </svg>
);

const NotifyIcon = () => (
  <svg width="16" height="16" viewBox="0 0 16 16">
    <path d="M.5 1.500h15v11h-5l-2.500 2.500L5.500 12.500h-5z" fill="none" stroke="#fff" />
  </svg>
);

const PlayMark = () => (
  <svg width="56" height="64" viewBox="0 0 56 64">
    <g fill="none" stroke="rgba(225,232,242,0.7)" strokeWidth="3.500" strokeLinejoin="round">
      <path d="M13 52V4l40 27-40 28" />
      <path d="M7 8v45l7-4M13 14l32 20-32 18" />
      <path d="M3 10v46l10 4" />
    </g>
  </svg>
);

/* ---------- data ---------- */

const dialogTree = [
  { name: "Links", icon: <LinkIcon /> },
  { name: "MicrosoftEdge", icon: <Folder pale /> },
  { name: "Music", icon: <MusicIcon /> },
  { name: "OneDrive", icon: <CloudIcon /> },
  { name: "Pictures", icon: <PictureIcon /> },
  { name: "Saved Games", icon: <GamesIcon /> },
  { name: "Searches", icon: <SearchesIcon /> },
  { name: "Videos", icon: <VideoIcon /> },
  { name: "This PC", icon: <PcIcon />, indent: 32 },
  { name: "3D Objects", icon: <CubeIcon /> },
  { name: "Desktop", icon: <ScreenIcon /> },
  { name: "Documents", icon: <DocIcon />, active: true },
  { name: "OneNote Notebooks", icon: <Folder />, indent: 48 },
];

const dialogFiles = [
  ["OneNote Notebooks", "2/9/2023 9:42 AM"],
  ["Outlook Files", "2/9/2023 9:42 AM"],
  ["PowerShell", "8/4/2023 6:15 PM"],
];

const explorerTree = [
  "CrashDumps",
  "D3DSCache",
  "dummy",
  "ElevatedDiagnostics",
  "FileZilla",
  "Google",
  "Microsoft",
  "MicrosoftEdge",
  "Mozilla",
  "PackageManagement",
  "Packages",
  "Programs",
  "Publishers",
  "Safer-Networking",
  "SolidDocuments",
  "Temp",
];

const files = [
  ["564784", "7/21/2024 5:32 PM", "File folder", ""],
  ["Rar$DRa6456.46044", "7/21/2024 5:34 PM", "File folder", ""],
  ["2z2wtrp1.saa", "8/3/2020 7:12 AM", "SAA File", "1 KB"],
  ["5e3nr3cb.sg1", "12/25/2020 12:24 PM", "SG1 File", "1 KB"],
  ["5xhjqwev.nwf", "7/3/2024 5:13 PM", "NWF File", "1 KB"],
  ["34bclfsc.ypm", "8/23/2019 8:09 PM", "YPM File", "1 KB"],
  ["34gz0vrb.4jl", "8/12/2022 1:57 PM", "4JL File", "1 KB"],
  ["Acrobat", "7/21/2024 5:32 PM", "File", "50 KB"],
  ["Ah", "7/21/2024 5:32 PM", "File", "59 KB"],
  ["Architects", "7/21/2024 5:32 PM", "File", "15 KB"],
  ["aria-debug-208.log", "3/6/2024 6:02 PM", "Text Document", "0 KB"],
  ["aria-debug-400.log", "3/6/2024 5:52 PM", "Text Document", "0 KB"],
  ["aria-debug-432.log", "3/7/2024 6:32 AM", "Text Document", "0 KB"],
  ["aria-debug-440.log", "3/7/2024 8:52 PM", "Text Document", "0 KB"],
  ["aria-debug-444.log", "3/7/2024 5:12 PM", "Text Document", "0 KB"],
  ["aria-debug-452.log", "3/6/2024 2:52 PM", "Text Document", "0 KB"],
  ["", "", "", ""],
];

const fileIcon = (type) => {
  if (type === "File folder") return <Folder />;
  return <Page lines={type === "Text Document"} />;
};

const VScroll = ({ before, thumb, after, left, bottom }) => (
  <VTrack $left={left} $bottom={bottom}>
    <ScrollButton aria-label="Scroll up">
      <Chevron dir="up" />
    </ScrollButton>
    <Rail>
      <Space $grow={before} />
      <Thumb $grow={thumb} />
      <Space $grow={after} />
    </Rail>
    <ScrollButton aria-label="Scroll down">
      <Chevron />
    </ScrollButton>
  </VTrack>
);

const HScroll = ({ thumb, after }) => (
  <HTrack>
    <ScrollButton aria-label="Scroll left">
      <Chevron dir="left" />
    </ScrollButton>
    <Rail $row>
      <Thumb $grow={thumb} />
      <Space $grow={after} />
    </Rail>
    <ScrollButton aria-label="Scroll right">
      <Chevron dir="right" />
    </ScrollButton>
  </HTrack>
);

const RunScriptDialog = () => (
  <Dialog>
    <DialogTitle>
      <span>Run Script:</span>
      <button aria-label="Close">
        <Cross color="#777" />
      </button>
    </DialogTitle>
    <NavRow $left={5}>
      <NavButton aria-label="Back">
        <Arrow color="#d0d0d0" />
      </NavButton>
      <NavButton aria-label="Forward">
        <Arrow dir="right" color="#d0d0d0" />
      </NavButton>
      <NavButton $width={22} aria-label="Recent">
        <Chevron size={7} color="#d0d0d0" />
      </NavButton>
      <NavButton $width={23} aria-label="Up">
        <Arrow dir="up" />
      </NavButton>
      <Address $width={292}>
        <DocIcon />
        <Crumb>
          <Chevron dir="right" size={7} />
          This PC
        </Crumb>
        <Crumb>
          <Chevron dir="right" size={7} />
          Documents
        </Crumb>
        <AddressSpace />
        <AddressButton aria-label="Previous locations">
          <Chevron />
        </AddressButton>
        <AddressButton $line aria-label="Refresh">
          <Refresh />
        </AddressButton>
      </Address>
      <SearchBox $gap={12}>
        <input placeholder="Search Documents" aria-label="Search Documents" />
        <Magnifier />
      </SearchBox>
    </NavRow>
    <Toolbar>
      <ToolButton>
        Organize <Caret w={8} color="#1e395b" />
      </ToolButton>
      <ToolButton>New folder</ToolButton>
    </Toolbar>
    <Split>
      <Tree $width={139}>
        {dialogTree.map((item) => (
          <TreeItem key={item.name} $indent={item.indent || 40} $active={item.active}>
            <IconSlot>{item.icon}</IconSlot>
            {item.name}
          </TreeItem>
        ))}
      </Tree>
      <VScroll left={1} before={110} thumb={85} after={72} />
      <Pane>
        <TableArea>
          <Table>
            <colgroup>
              <col width="258" />
              <col />
            </colgroup>
            <thead>
              <tr>
                <th>
                  <HeadCell $first>
                    Name
                    <Chevron dir="up" stroke={1} />
                  </HeadCell>
                </th>
                <th>
                  <HeadCell $last>Date modified</HeadCell>
                </th>
              </tr>
            </thead>
            <tbody>
              {dialogFiles.map(([name, date]) => (
                <FileRow key={name}>
                  <td>
                    <FileName>
                      <Folder />
                      {name}
                    </FileName>
                  </td>
                  <td>{date}</td>
                </FileRow>
              ))}
            </tbody>
          </Table>
        </TableArea>
        <HScroll thumb={8} after={1} />
      </Pane>
    </Split>
    <DialogFooter>
      <FieldLabel htmlFor="file-name">File name:</FieldLabel>
      <Combo>
        <input id="file-name" type="text" />
        <Chevron stroke={1} />
      </Combo>
      <TypeSelect aria-label="File type">
        <option>AutoIt scripts</option>
      </TypeSelect>
      <OpenButton>Open</OpenButton>
    </DialogFooter>
  </Dialog>
);

const RibbonBar = () => (
  <Ribbon>
    <Group $width={263}>
      <GroupBody>
        <BigButton $width={78}>
          <PinIcon />
          Pin to Quick
          <br />
          access
        </BigButton>
        <BigButton $width={32} $off>
          <CopyIcon />
          Copy
        </BigButton>
        <BigButton $width={50} $off>
          <PasteIcon />
          Paste
        </BigButton>
        <Stack>
          <SmallButton $off>
            <CutIcon /> Cut
          </SmallButton>
          <SmallButton $off>
            <PathIcon /> Copy path
          </SmallButton>
          <SmallButton $off>
            <ShortcutPaste /> Paste shortcut
          </SmallButton>
        </Stack>
      </GroupBody>
      <GroupLabel>Clipboard</GroupLabel>
    </Group>
    <Group $width={165}>
      <GroupBody>
        <Stack $center $left={8}>
          <SmallButton $off>
            <MoveIcon /> Move to <Caret color="#b5b5b5" />
          </SmallButton>
          <SmallButton $off>
            <CopyToIcon /> Copy to <Caret color="#b5b5b5" />
          </SmallButton>
        </Stack>
        <GroupLine />
        <Stack $center $left={7}>
          <SmallButton $off>
            <IconSlot>
              <Cross size={13} color="#66758f" stroke={2.5} />
            </IconSlot>
            Delete <Caret />
          </SmallButton>
          <SmallButton $off>
            <RenameIcon /> Rename
          </SmallButton>
        </Stack>
      </GroupBody>
      <GroupLabel>Organize</GroupLabel>
    </Group>
    <Group $width={83}>
      <GroupBody>
        <BigButton $width={48}>
          <NewFolderIcon />
          New
          <br />
          folder
        </BigButton>
        <Stack>
          <SmallButton aria-label="New item">
            <NewItemIcon /> <Caret />
          </SmallButton>
          <SmallButton aria-label="Easy access">
            <EasyIcon /> <Caret />
          </SmallButton>
        </Stack>
      </GroupBody>
      <GroupLabel>New</GroupLabel>
    </Group>
    <Group $width={133}>
      <GroupBody>
        <BigButton $width={62}>
          <IconSlot $width={32}>
            <Checked w={22} h={32} />
          </IconSlot>
          Properties
          <Caret />
        </BigButton>
        <Stack $left={2}>
          <SmallButton $off>
            <OpenIcon /> Open <Caret color="#b5b5b5" />
          </SmallButton>
          <SmallButton $off>
            <EditIcon /> Edit
          </SmallButton>
          <SmallButton>
            <IconSlot>
              <HistoryIcon />
            </IconSlot>
            History
          </SmallButton>
        </Stack>
      </GroupBody>
      <GroupLabel>Open</GroupLabel>
    </Group>
    <Group $width={115}>
      <GroupBody>
        <Stack $left={7}>
          <SmallButton>
            <Squares fills={[1, 1, 1, 1]} /> Select all
          </SmallButton>
          <SmallButton>
            <Squares fills={[0, 0, 0, 0]} /> Select none
          </SmallButton>
          <SmallButton>
            <Squares fills={[0, 1, 1, 0]} /> Invert selection
          </SmallButton>
        </Stack>
      </GroupBody>
      <GroupLabel>Select</GroupLabel>
    </Group>
  </Ribbon>
);

const ExplorerWindow = () => (
  <Explorer>
    <TitleBar>
      <Folder />
      <Divider $right={11} />
      <Checked />
      <IconSlot $width={29}>
        <Folder />
      </IconSlot>
      <svg width="8" height="6" viewBox="0 0 8 6">
        <path d="M0 .5h8M1 2.500h6L4 6z" stroke="#1e1e1e" strokeWidth=".8" />
      </svg>
      <Divider />
      <TitleText>Temp</TitleText>
      <Control aria-label="Minimize">
        <svg width="10" height="10">
          <path d="M0 5.500h10" stroke="#000" />
        </svg>
      </Control>
      <Control aria-label="Maximize">
        <svg width="10" height="10">
          <path d="M.5 .5h9v9h-9z" fill="none" stroke="#000" />
        </svg>
      </Control>
      <Control aria-label="Close">
        <Cross />
      </Control>
    </TitleBar>
    <Tabs>
      <Tab $width={56} $file>
        File
      </Tab>
      <Tab $width={58} $active>
        Home
      </Tab>
      <Tab $width={58}>Share</Tab>
      <Tab $width={54}>View</Tab>
      <TabTools>
        <Chevron dir="up" color="#999" stroke={1} />
        <HelpIcon />
      </TabTools>
    </Tabs>
    <RibbonBar />
    <NavRow $left={5}>
      <NavButton aria-label="Back">
        <Arrow />
      </NavButton>
      <NavButton $width={32} aria-label="Forward">
        <Arrow dir="right" color="#d0d0d0" />
      </NavButton>
      <NavButton $width={16} aria-label="Recent">
        <Chevron size={7} />
      </NavButton>
      <NavButton $width={25} aria-label="Up">
        <Arrow dir="up" />
      </NavButton>
      <Address>
        <Folder />
        {["admin", "AppData", "Local", "Temp"].map((part) => (
          <Crumb key={part}>
            <Chevron dir="right" size={7} />
            {part}
          </Crumb>
        ))}
        <Crumb aria-label="Open folder list">
          <Chevron dir="right" size={7} />
        </Crumb>
        <AddressSpace />
        <AddressButton aria-label="Previous locations">
          <Chevron />
        </AddressButton>
        <AddressButton $line aria-label="Refresh">
          <Refresh />
        </AddressButton>
      </Address>
      <SearchBox $gap={10}>
        <input placeholder="Search Temp" aria-label="Search Temp" />
        <Magnifier />
      </SearchBox>
    </NavRow>
    <Split>
      <Tree $width={139}>
        {explorerTree.map((name) => (
          <TreeItem key={name} $indent={56} $active={name === "Temp"}>
            <IconSlot>
              <Folder />
            </IconSlot>
            {name}
          </TreeItem>
        ))}
      </Tree>
      <VScroll left={1} before={74} thumb={80} after={199} />
      <Pane>
        <TableArea>
          <Table>
            <colgroup>
              <col width="258" />
              <col width="144" />
              <col width="120" />
              <col />
            </colgroup>
            <thead>
              <tr>
                <th>
                  <HeadCell $first>
                    Name
                    <Chevron dir="up" stroke={1} />
                  </HeadCell>
                </th>
                <th>
                  <HeadCell>Date modified</HeadCell>
                </th>
                <th>
                  <HeadCell>Type</HeadCell>
                </th>
                <th>
                  <HeadCell $last>Size</HeadCell>
                </th>
              </tr>
            </thead>
            <tbody>
              {files.map(([name, date, type, size]) => (
                <FileRow key={name} $active={name === "2z2wtrp1.saa"}>
                  <td>
                    <FileName>
                      {fileIcon(type)}
                      {name}
                    </FileName>
                  </td>
                  <td>{date}</td>
                  <td>{type}</td>
                  <td>{size}</td>
                </FileRow>
              ))}
            </tbody>
          </Table>
        </TableArea>
        <HScroll thumb={556} after={18} />
      </Pane>
      <VScroll bottom={16} before={1} thumb={20} after={302} />
    </Split>
    <StatusBar>
      283 items
      <AddressSpace />
      <ViewButton $active aria-label="Details">
        <DetailsIcon />
      </ViewButton>
      <ViewButton aria-label="Large thumbnails">
        <PictureIcon w={14} h={11} />
      </ViewButton>
    </StatusBar>
  </Explorer>
);

const App = () => {
  return (
    <Desktop>
      <GlobalStyle />
      <Shortcuts>
        <Shortcut>
          <ChromeIcon />
          Google
          <br />
          Chrome
        </Shortcut>
        <Shortcut>
          <WordIcon />
          etwireless.rtf
        </Shortcut>
        <Shortcut>
          <WordIcon />
          storysheet.rtf
        </Shortcut>
        <Shortcut>
          <VlcIcon />
          VLC media
          <br />
          player
        </Shortcut>
        <Shortcut>
          <WordIcon />
          foundrule.rtf
        </Shortcut>
        <Shortcut>
          <WordIcon />
          superafrica...
        </Shortcut>
      </Shortcuts>
      <BackWindow>
        <BackBar $height={50} $line="#e0e0e0" />
        <BackBar $height={66} $line="#8c8c8c" />
        <BackBar $height={24} $line="#8c8c8c" />
        <BackBar $height={3} $line="#8c8c8c" />
        <BackText>EE</BackText>
        <BackFoot />
      </BackWindow>
      <RunScriptDialog />
      <ExplorerWindow />
      <Watermark>
        ANY
        <PlayMark />
        RUN
      </Watermark>
      <Taskbar>
        <TaskButton $width={48} aria-label="Start">
          <WindowsLogo />
        </TaskButton>
        <TaskSearch>
          <Magnifier size={17} color="#222" stroke={1} />
          <input placeholder="Type here to search" aria-label="Type here to search" />
          <Sundae />
        </TaskSearch>
        <TaskButton aria-label="Task View">
          <TaskViewIcon />
        </TaskButton>
        <TaskButton $width={51} aria-label="Edge">
          <EdgeIcon />
        </TaskButton>
        <RunningButton $width={48} $active aria-label="File Explorer">
          <ExplorerIcon />
        </RunningButton>
        <TaskButton aria-label="Firefox">
          <FirefoxIcon />
        </TaskButton>
        <RunningButton $width={39} $gap={5} aria-label="Script">
          <Page w={17} h={21} />
        </RunningButton>
        <RunningButton $width={40} $gap={5} aria-label="WinRAR">
          <RarIcon />
        </RunningButton>
        <Tray>
          <TrayButton aria-label="Show hidden icons">
            <Chevron dir="up" size={13} color="#fff" stroke={1} />
          </TrayButton>
          <TrayButton aria-label="Meet Now">
            <CameraTray />
          </TrayButton>
          <TrayButton aria-label="Network">
            <NetworkTray />
          </TrayButton>
          <TrayButton aria-label="Volume">
            <VolumeTray />
          </TrayButton>
          <Clock>
            5:36 PM
            <br />
            7/21/2024
          </Clock>
          <TaskButton $width={36} aria-label="Notifications">
            <NotifyIcon />
          </TaskButton>
          <ShowDesktop aria-label="Show desktop" />
        </Tray>
      </Taskbar>
    </Desktop>
  );
};

export default App;
